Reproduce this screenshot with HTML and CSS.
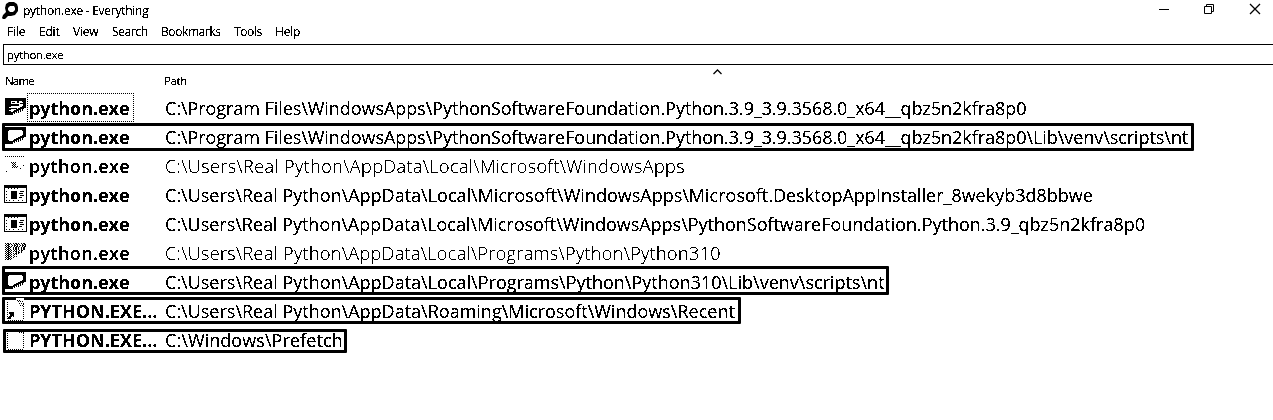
FILE: index.html
```html
<!DOCTYPE html>
<html lang="en">
<head>
<meta charset="utf-8">
<title>python.exe - Everything</title>
<link rel="stylesheet" href="styles.css">
</head>
<body>
<svg class="defs" width="0" height="0">
  <filter id="crisp" x="0" y="0" width="1" height="1"><feComponentTransfer><feFuncA type="discrete" tableValues="0 0 1 1 1"/></feComponentTransfer></filter>
  <symbol id="console" viewBox="0 0 23 18"><path d="M0 0h23v18H0z"/><path fill="#fff" d="M1 3h21v14H1z"/><path d="M7 6h6v8H7zM16 6h4v1h-4zM15 8h4v1h-4zM16 10h4v1h-4zM15 12h3v1h-3zM2 6h1v1H2zM2 9h1v1H2zM2 12h1v1H2zM2 15h1v1H2zM5 15h1v1H5zM9 15h1v1H9zM14 15h1v1h-1zM18 15h1v1h-1z"/><path d="M4 3h1v1H4zM7 3h1v1H7zM10 3h1v1h-1zM13 3h1v1h-1z"/></symbol>
  <symbol id="script" viewBox="0 0 21 19"><path d="M0 1h21v10h-2v1h-1v2h-2v1h-2v1h-3v1H9v1H0z"/><path fill="#fff" d="M4 4h13v1h1v4h-1v1h-2v1h-2v1h-2v1H9v1H8v1H4v-1H3V5h1z"/><path fill="#fff" d="M8 16h1v2H8zM10 15h1v2h-1zM12 14h1v2h-1zM14 13h1v2h-1zM16 12h1v2h-1z"/></symbol>
</svg>
<header class="titlebar">
  <svg class="logo" width="17" height="17" viewBox="0 0 17 17"><path d="M4 2l3-2h5l3 2 1 3v4l-3 4-4 1H6l-3 3H1l-1-1 1-3 3-3-1-4z"/><path fill="#fff" d="M8 4h4l1 2v2l-2 2H8L6 8V6z"/></svg>
  <span class="caption">python.exe - Everything</span>
  <div class="controls">
    <svg width="12" height="12" viewBox="0 0 12 12"><path d="M2 6h10v1H2z"/></svg>
    <svg width="12" height="12" viewBox="0 0 12 12"><path fill="none" stroke="#000" d="M1.500 3.500h7v7h-7zM3.500 3V1.500h7v7H9"/></svg>
    <svg width="12" height="12" viewBox="0 0 12 12"><path fill="none" stroke="#000" stroke-width="1.300" d="M1 1l10 10M11 1L1 11"/></svg>
  </div>
</header>
<nav class="menu"><span class="m1">File</span><span class="m2">Edit</span><span class="m3">View</span><span class="m4">Search</span><span class="m5">Bookmarks</span><span class="m6">Tools</span><span class="m7">Help</span></nav>
<div class="search"><span>python.exe</span></div>
<div class="columns"><span class="label">Name</span><span class="label">Path</span><svg class="sort" width="9" height="6" viewBox="0 0 9 6"><path fill="none" stroke="#000" stroke-width="1.300" d="M.5 5l4-4 4 4"/></svg></div>
<main class="results">
  <div class="row"><svg class="icon" width="21" height="19"><use href="#script"/><path d="M3 4h3v11H3zM4 7h10v2H4zM6 11h6v1H6zM12 4h2v2h-2zM7 5h3v1H7zM15 6h3v1h-3z"/><path fill="#fff" d="M4 13h3v1H4zM4 10h4v1H4z"/></svg><b class="name focused">python.exe</b><span class="path p1">C:\Program Files\WindowsApps\PythonSoftwareFoundation.Python.3.9_3.9.3568.0_x64__qbz5n2kfra8p0</span></div>
  <div class="row marked r2"><svg class="icon" width="21" height="19"><use href="#script"/></svg><b class="name">python.exe</b><span class="path p2">C:\Program Files\WindowsApps\PythonSoftwareFoundation.Python.3.9_3.9.3568.0_x64__qbz5n2kfra8p0\Lib\venv\scripts\nt</span></div>
  <div class="row soft"><svg class="icon" width="21" height="19"><path fill="none" stroke="#000" stroke-dasharray="1 1" d="M0 1.500h20M6 7.500h5M7 8.500h4M8 9.500h3M7 10.500h4M8 11.500h5M7 12.500h6"/><path d="M1 16h1v1H1zM15 13h1v1h-1zM18 10h1v1h-1z"/></svg><b class="name">python.exe</b><span class="path p3">C:\Users\Real Python\AppData\Local\Microsoft\WindowsApps</span></div>
  <div class="row"><svg class="icon wide" width="23" height="18"><use href="#console"/></svg><b class="name">python.exe</b><span class="path p4">C:\Users\Real Python\AppData\Local\Microsoft\WindowsApps\Microsoft.DesktopAppInstaller_8wekyb3d8bbwe</span></div>
  <div class="row"><svg class="icon wide" width="23" height="18"><use href="#console"/></svg><b class="name">python.exe</b><span class="path p5">C:\Users\Real Python\AppData\Local\Microsoft\WindowsApps\PythonSoftwareFoundation.Python.3.9_qbz5n2kfra8p0</span></div>
  <div class="row soft"><svg class="icon" width="21" height="19"><path fill="none" stroke="#000" stroke-dasharray="1 1 2 1 1 2" d="M0 1.500h21M1 2.500h20M0 3.500h4M7 3.500h14M1 4.500h20M0 5.500h14M16 5.500h5M1 6.500h4M8 6.500h12M0 7.500h20M1 8.500h11M14 8.500h5M0 9.500h18M1 10.500h7M11 10.500h6M0 11.500h14M1 12.500h11M0 13.500h10M1 14.500h11M0 15.500h9M1 16.500h6M0 17.500h8"/></svg><b class="name">python.exe</b><span class="path p6">C:\Users\Real Python\AppData\Local\Programs\Python\Python310</span></div>
  <div class="row marked r7"><svg class="icon" width="21" height="19"><use href="#script"/></svg><b class="name">python.exe</b><span class="path p7">C:\Users\Real Python\AppData\Local\Programs\Python\Python310\Lib\venv\scripts\nt</span></div>
  <div class="row marked r8"><svg class="icon" width="21" height="23" viewBox="0 -2 21 23"><path fill="#fff" d="M11-2h8v3h-8z"/><path fill="none" stroke="#000" stroke-dasharray="1 1" d="M2.500 2v18M18.500 4v16M3 20.500h16M12 .5h4M13 1.500h5M14 3.500h5M15 5.500h4"/><path d="M4 12h5v5H8v-1H7v1H6v2H3v-2h1v-1h1v-2H4z"/></svg><b class="name upper">PYTHON.EXE...</b><span class="path p8">C:\Users\Real Python\AppData\Roaming\Microsoft\Windows\Recent</span></div>
  <div class="row marked r9"><svg class="icon" width="21" height="22" viewBox="0 -2 21 22"><path fill="none" stroke="#000" stroke-dasharray="1 1" d="M2.500 1v18M18.500 3v16M3 19.500h16M2 .5h12M13 .5h4M14 2.500h5"/></svg><b class="name upper">PYTHON.EXE...</b><span class="path p9">C:\Windows\Prefetch</span></div>
</main>
</body>
</html>
```
FILE: styles.css
```css
*, *::before { box-sizing: border-box; }
body { margin: 0; height: 420px; overflow: hidden; background: #fff; color: #000; font: 12px/16px "Open Sans", "Noto Sans", sans-serif; white-space: nowrap; }
.defs { position: absolute; }
.titlebar { display: flex; height: 22px; align-items: flex-start; padding: 2px 12px 0 2px; }
.caption { margin: 1px 0 0 4px; letter-spacing: -.26px; }
.controls { display: flex; gap: 34px; margin-left: auto; padding-top: 1px; }
.caption, .menu span, .search span, .label, .name, .path { filter: url(#crisp); }
.menu { display: flex; height: 22px; padding: 2px 0 0 7px; }
.menu span { letter-spacing: -.2px; }
.menu .m4, .menu .m5, .menu .m6 { letter-spacing: -.4px; }
.m1 { width: 32px; } .m2 { width: 34px; } .m3 { width: 39px; } .m4 { width: 49px; }
.m5 { width: 73px; } .m6 { width: 41px; }
.search { height: 21px; margin-left: 3px; padding: 1px 3px; border: 1px solid #000; border-right: 0; font-size: 11.5px; line-height: 17px; letter-spacing: -.35px; }
.search span { display: block; }
.columns { display: grid; grid-template-columns: 159px 548px auto; height: 29px; padding: 8px 0 0 5px; font-size: 11.5px; letter-spacing: -.8px; }
.columns .label + .label { letter-spacing: -.4px; }
.sort { margin-top: -4px; margin-left: 1px; }
.results { display: grid; grid-auto-rows: 29px; }
.row { position: relative; display: flex; align-items: center; height: 29px; font-size: 18px; line-height: 25px; }
.marked::before { content: ""; position: absolute; z-index: -1; left: 2px; top: 0; height: 28px; border: 3px solid #000; border-radius: 1px; }
.r2::before { width: 1192px; }
.r7::before { width: 887px; top: -2px; height: 29px; }
.r8::before { width: 739px; height: 27px; }
.r9::before { width: 344px; left: 3px; top: 3px; height: 24px; }
.icon { flex: none; margin: -4px 1px 0 5px; width: 21px; }
.wide { margin: -3px 0 0 4px; width: 23px; }
.name { flex: none; width: 138px; padding-left: 2px; letter-spacing: -.05px; font-weight: 700; }
.upper { letter-spacing: 0; }
.focused { width: 107px; height: 29px; margin: -2px 31px 0 0; padding: 2px 0 0 1px; border: 1px dotted #000; }
.soft .name { font-weight: 600; letter-spacing: .35px; }
.soft .path { font-weight: 300; }
.soft .p3 { letter-spacing: .42px; }
.soft .p6 { letter-spacing: .35px; }
.p1, .p2 { letter-spacing: -.06px; }
.p5 { letter-spacing: -.02px; }
.p9 { letter-spacing: .07px; }
```
